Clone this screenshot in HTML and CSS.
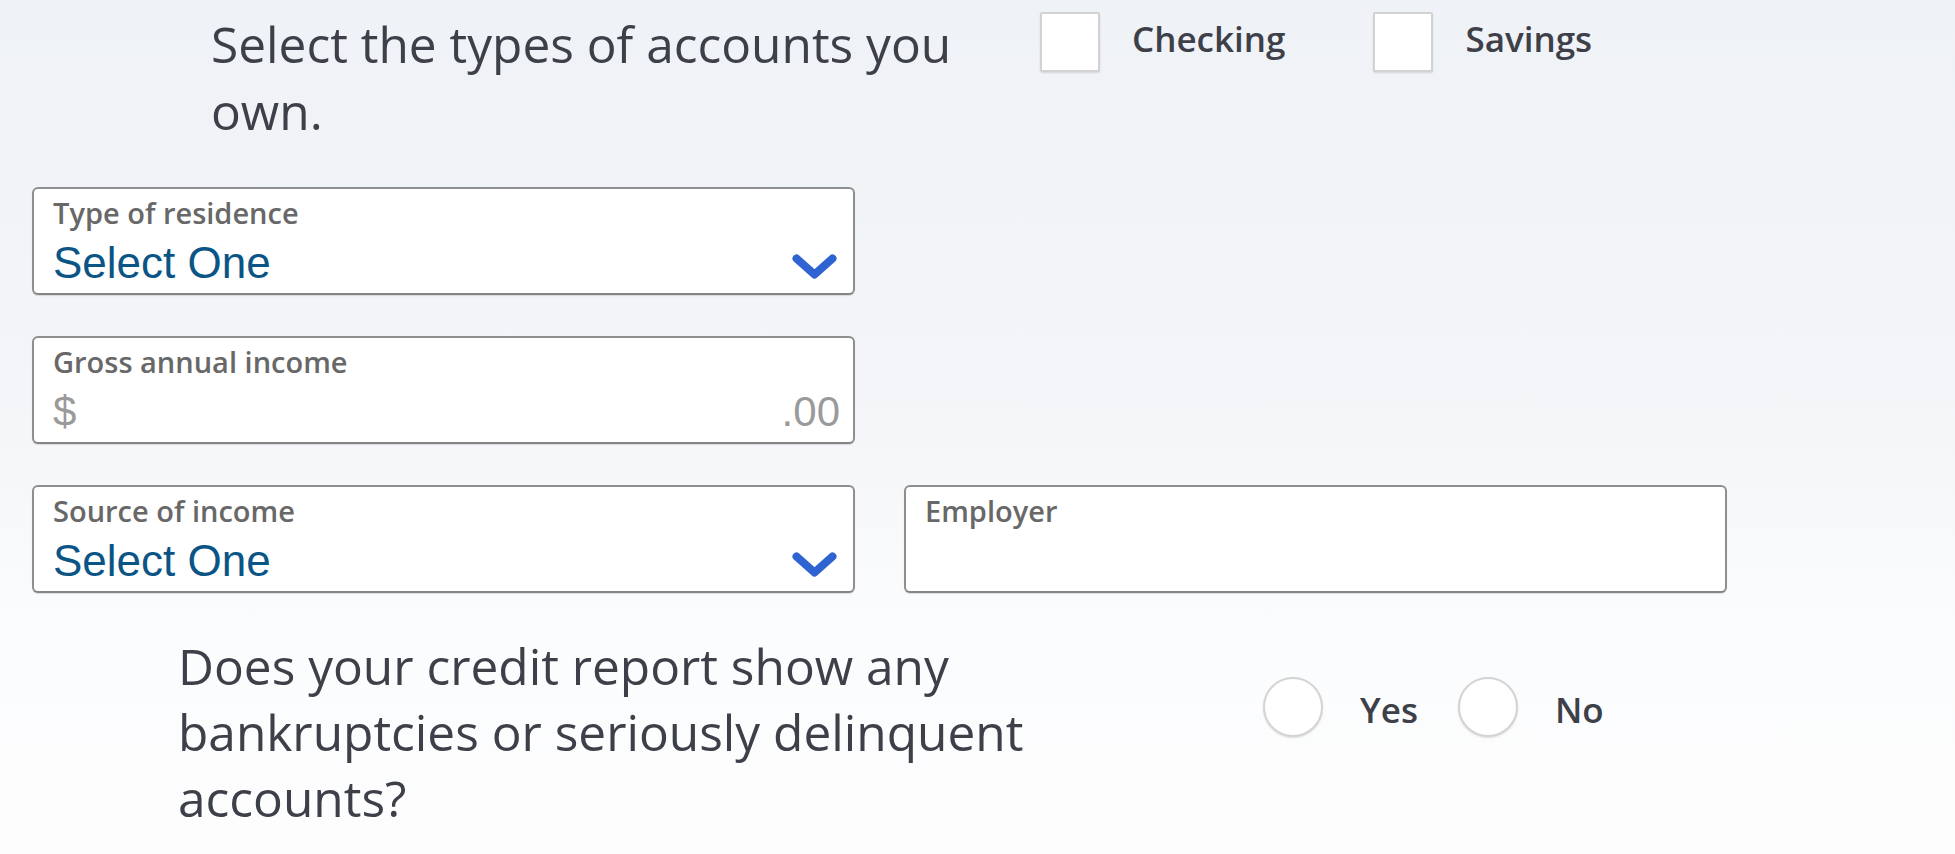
FILE: index.html
```html
<!DOCTYPE html>
<html lang="en">
<head>
<meta charset="utf-8">
<title>Application form</title>
<link rel="stylesheet" href="styles.css">
</head>
<body>
<main class="form">
  <section class="accounts-row">
    <h2 class="question heading-accounts">Select the types of accounts you own.</h2>
    <div class="choice-group">
      <label class="choice"><span class="checkbox"></span><span class="choice-text checkbox-text">Checking</span></label>
      <label class="choice choice-savings"><span class="checkbox"></span><span class="choice-text checkbox-text">Savings</span></label>
    </div>
  </section>

  <section class="fields">
    <div class="field">
      <div class="field-label">Type of residence</div>
      <div class="field-value">
        <span class="select-text">Select One</span>
        <svg class="chevron" width="46" height="26" viewBox="0 0 46 26"><polyline points="4.5,4.5 22.5,20.5 40.5,4.5" fill="none" stroke="#2f63d2" stroke-width="8" stroke-linecap="round" stroke-linejoin="round"/></svg>
      </div>
    </div>

    <div class="field">
      <div class="field-label">Gross annual income</div>
      <div class="field-value">
        <span class="money">$</span>
        <span class="money cents">.00</span>
      </div>
    </div>

    <div class="field-row">
      <div class="field">
        <div class="field-label">Source of income</div>
        <div class="field-value">
          <span class="select-text">Select One</span>
          <svg class="chevron" width="46" height="26" viewBox="0 0 46 26"><polyline points="4.5,4.5 22.5,20.5 40.5,4.5" fill="none" stroke="#2f63d2" stroke-width="8" stroke-linecap="round" stroke-linejoin="round"/></svg>
        </div>
      </div>
      <div class="field">
        <div class="field-label">Employer</div>
        <div class="field-value"></div>
      </div>
    </div>
  </section>

  <section class="bankruptcy-row">
    <h2 class="question heading-bankruptcy">Does your credit report show any bankruptcies or seriously delinquent accounts?</h2>
    <div class="choice-group radio-group">
      <label class="choice"><span class="radio"></span><span class="choice-text radio-text">Yes</span></label>
      <label class="choice choice-no"><span class="radio"></span><span class="choice-text radio-text">No</span></label>
    </div>
  </section>
</main>
</body>
</html>
```

FILE: styles.css
```css
html, body {
  margin: 0;
  padding: 0;
}

body {
  width: 1955px;
  height: 854px;
  overflow: hidden;
  background: linear-gradient(to bottom, #eff2f6 0%, #f3f5f8 45%, #fbfcfd 75%, #fdfdfe 100%);
  font-family: "Open Sans", "Noto Sans", sans-serif;
  color: #3e4049;
}

.form {
  display: flex;
  flex-direction: column;
}

.question {
  margin: 0;
  font-size: 49.6px;
  font-weight: 400;
  line-height: 67px;
  color: #3e4049;
}

/* accounts row */
.accounts-row {
  display: flex;
  align-items: flex-start;
  padding: 11px 0 0 211px;
}

.heading-accounts {
  width: 790px;
  margin-right: 39px;
}

.choice-group {
  display: flex;
  align-items: center;
  margin-top: 1px;
}

.choice {
  display: flex;
  align-items: center;
}

.checkbox {
  width: 60px;
  height: 60px;
  box-sizing: border-box;
  background: #fff;
  border: 2px solid #d2d2d2;
  border-radius: 2px;
  box-shadow: 0 1px 2px rgba(0, 0, 0, 0.12);
}

.choice-text {
  font-size: 35px;
  font-weight: 600;
  color: #3e4049;
}

.checkbox-text {
  margin-left: 32px;
  margin-bottom: 8px;
}

.choice-savings {
  margin-left: 88px;
}

/* fields */
.fields {
  display: flex;
  flex-direction: column;
  gap: 41px;
  padding-left: 32px;
  margin-top: 42px;
}

.field-row {
  display: flex;
  gap: 49px;
}

.field {
  width: 823px;
  height: 108px;
  box-sizing: border-box;
  background: #fff;
  border: 2px solid #8f8f8f;
  border-bottom-color: #858585;
  border-radius: 6px;
  box-shadow: 0 1px 1px rgba(0, 0, 0, 0.12);
  padding: 8px 15px 0 19px;
}

.field-label {
  font-size: 29px;
  font-weight: 600;
  line-height: 32px;
  color: #686868;
}

.field-value {
  display: flex;
  justify-content: space-between;
  align-items: center;
  height: 50px;
  margin-top: 9px;
}

.select-text {
  font-family: "Liberation Sans", Arial, sans-serif;
  font-size: 44px;
  line-height: 50px;
  color: #0b5586;
}

.chevron {
  display: block;
  margin-top: 8px;
  margin-right: 0;
}

.money {
  font-family: "Liberation Sans", Arial, sans-serif;
  font-size: 42px;
  line-height: 50px;
  color: #9a9a9a;
}

.cents {
  margin-right: -2px;
}

/* bankruptcy row */
.bankruptcy-row {
  display: flex;
  align-items: flex-start;
  padding-left: 178px;
  margin-top: 40px;
}

.heading-bankruptcy {
  width: 862px;
  line-height: 66px;
}

.radio-group {
  margin-left: 223px;
  margin-top: 44px;
}

.radio {
  width: 60px;
  height: 60px;
  box-sizing: border-box;
  background: #fff;
  border: 2px solid #d4d4d4;
  border-radius: 50%;
  box-shadow: 0 1px 2px rgba(0, 0, 0, 0.12);
}

.radio-text {
  margin-left: 37px;
  margin-top: 4px;
}

.choice-no {
  margin-left: 40px;
}
```
